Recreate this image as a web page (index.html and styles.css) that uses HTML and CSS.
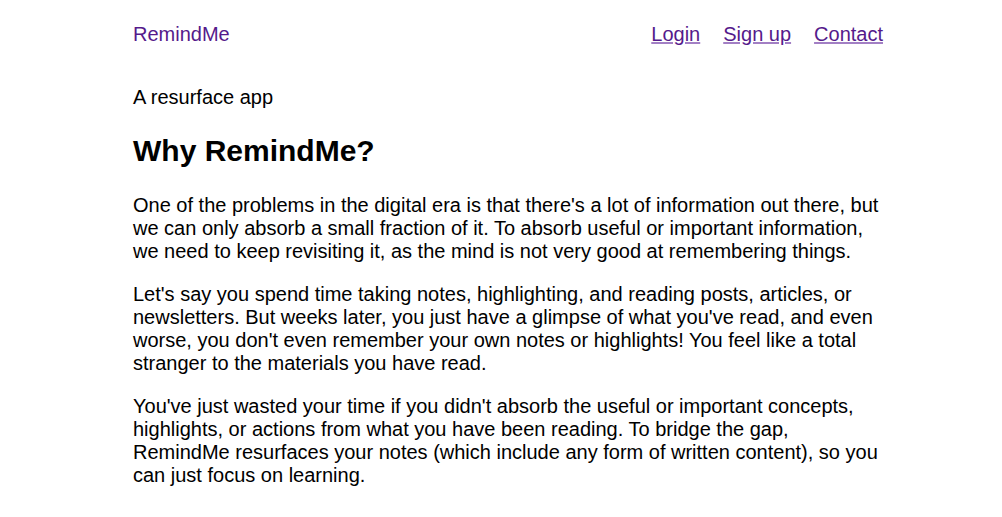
FILE: index.html
```html
<!DOCTYPE html>
<html lang="en">
<head>
<meta charset="utf-8">
<title>RemindMe</title>
<link rel="stylesheet" href="styles.css">
</head>
<body>
<div class="page">
  <header class="header">
    <a class="logo" href="#">RemindMe</a>
    <nav class="nav">
      <a class="nav-link" href="#">Login</a>
      <a class="nav-link" href="#">Sign up</a>
      <a class="nav-link" href="#">Contact</a>
    </nav>
  </header>
  <main class="main">
    <p class="tagline">A resurface app</p>
    <h1 class="title">Why RemindMe?</h1>
    <p>One of the problems in the digital era is that there's a lot of information out there, but we can only absorb a small fraction of it. To absorb useful or important information, we need to keep revisiting it, as the mind is not very good at remembering things.</p>
    <p>Let's say you spend time taking notes, highlighting, and reading posts, articles, or newsletters. But weeks later, you just have a glimpse of what you've read, and even worse, you don't even remember your own notes or highlights! You feel like a total stranger to the materials you have read.</p>
    <p>You've just wasted your time if you didn't absorb the useful or important concepts, highlights, or actions from what you have been reading. To bridge the gap, RemindMe resurfaces your notes (which include any form of written content), so you can just focus on learning.</p>
  </main>
</div>
</body>
</html>
```

FILE: styles.css
```css
html, body {
  margin: 0;
  padding: 0;
  background: #ffffff;
}

body {
  font-family: "Liberation Sans", Arial, sans-serif;
  font-size: 20px;
  color: #000000;
  padding-left: 14px;
}

.page {
  max-width: 750px;
  margin: 0 auto;
}

.header {
  display: flex;
  justify-content: space-between;
  align-items: center;
  padding-top: 23px;
  padding-bottom: 20px;
}

.logo {
  color: #551a8b;
  text-decoration: none;
}

.nav {
  display: flex;
  gap: 23px;
}

.nav-link {
  color: #551a8b;
  text-decoration: underline;
  text-decoration-color: #a27fc4;
}

.main p {
  margin: 20px 0;
}

.tagline {
  margin-top: 20px;
}

.title {
  font-size: 30px;
  font-weight: bold;
  margin: 25px 0 26px;
}
```
